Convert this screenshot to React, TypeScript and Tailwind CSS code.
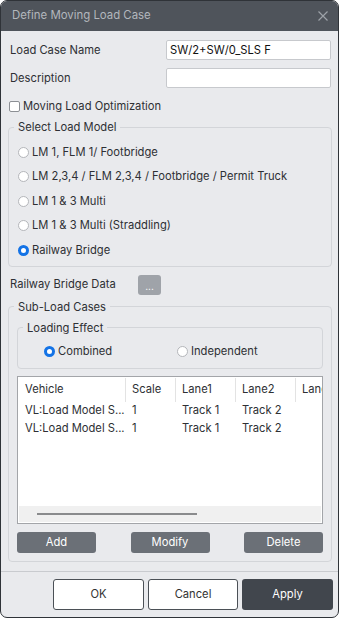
import React from "react";

function Radio({ checked }: { checked?: boolean }) {
  return checked ? (
    <span className="w-[11px] h-[11px] rounded-full border-[3px] border-[#1473e6] bg-white shrink-0" />
  ) : (
    <span className="w-[11px] h-[11px] rounded-full border border-[#b4b6ba] bg-white shrink-0" />
  );
}

const models = [
  "LM 1, FLM 1/ Footbridge",
  "LM 2,3,4 / FLM 2,3,4 / Footbridge / Permit Truck",
  "LM 1 & 3 Multi",
  "LM 1 & 3 Multi (Straddling)",
  "Railway Bridge",
];

export default function App() {
  return (
    <div className="w-[341px] h-[619px] bg-white font-['Inter',sans-serif] text-[11.2px] text-[#2e3034]">
      <div className="w-[339px] h-[618px] rounded-[7px] border border-[#2f3338] bg-[#e9eaed] overflow-hidden flex flex-col">
        {/* title bar */}
        <div className="h-[30px] bg-[#4f545b] flex items-center justify-between pl-[11px] pr-[8px] shrink-0">
          <span className="text-[11.4px] text-[#b3b7bd]">Define Moving Load Case</span>
          <svg width="14" height="14" viewBox="0 0 14 14" fill="none" stroke="#9da2a8" strokeWidth="1.2">
            <path d="M2.5 2.5 L11.5 11.5 M11.5 2.5 L2.5 11.5" />
          </svg>
        </div>

        <div className="flex flex-col pl-[7px] pr-[6px] flex-1 min-w-0">
          <div className="mt-[9px] h-[20px] flex items-center">
            <span className="pl-[2px]">Load Case Name</span>
            <div className="ml-auto mr-[1px] w-[165px] h-[20px] bg-white border border-[#c7c9cd] rounded-[2px] flex items-center pl-[3px] text-[#111]">
              SW/2+SW/0_SLS F
            </div>
          </div>
          <div className="mt-[8px] h-[20px] flex items-center">
            <span className="pl-[2px]">Description</span>
            <div className="ml-auto mr-[1px] w-[165px] h-[20px] bg-white border border-[#c7c9cd] rounded-[2px]" />
          </div>
          <div className="mt-[11px] h-[14px] flex items-center">
            <span className="ml-[1px] w-[11px] h-[11px] bg-white border border-[#8c8f94] rounded-[2px]" />
            <span className="ml-[3px]">Moving Load Optimization</span>
          </div>

          <fieldset className="mt-[7px] min-w-0 border border-[#d3d5d9] rounded-[4px] pb-[3px]">
            <legend className="ml-[5px] px-[4px] h-[14px] leading-[14px]">Select Load Model</legend>
            <div className="pt-[6px] pl-[9px]">
              {models.map((m, i) => (
                <div key={m} className="h-[24.5px] flex items-center">
                  <Radio checked={i === 4} />
                  <span className="ml-[3px]">{m}</span>
                </div>
              ))}
            </div>
          </fieldset>

          <div className="mt-[8px] h-[20px] flex items-center">
            <span className="pl-[2px] w-[130px]">Railway Bridge Data</span>
            <div className="w-[23px] h-[20px] rounded-[3px] bg-[#9fa3a9] flex items-center justify-center text-white text-[10px] leading-none pt-[2px]">
              ...
            </div>
          </div>

          <fieldset className="mt-[5px] min-w-0 border border-[#d3d5d9] rounded-[4px] pb-[8px]">
            <legend className="ml-[5px] px-[4px] h-[14px] leading-[14px]">Sub-Load Cases</legend>
            <div className="px-[8px]">
              <fieldset className="mt-[7px] min-w-0 border border-[#d3d5d9] rounded-[4px] pb-[9px]">
                <legend className="ml-[5px] px-[4px] h-[14px] leading-[14px]">Loading Effect</legend>
                <div className="mt-[10px] h-[14px] flex items-center pl-[26px]">
                  <Radio checked />
                  <span className="ml-[3px] w-[119px]">Combined</span>
                  <Radio />
                  <span className="ml-[3px]">Independent</span>
                </div>
              </fieldset>

              <div className="mt-[7px] h-[148px] w-full min-w-0 bg-white border border-[#a3a5a9] flex flex-col overflow-hidden">
                <div className="h-[25px] flex items-start shrink-0 whitespace-nowrap">
                  <div className="w-[108px] shrink-0 h-[24px] mt-[1px] border-r border-[#e3e3e3] pl-[7px] flex items-center">Vehicle</div>
                  <div className="w-[50px] shrink-0 h-[24px] mt-[1px] border-r border-[#e3e3e3] pl-[6px] flex items-center">Scale</div>
                  <div className="w-[60px] shrink-0 h-[24px] mt-[1px] border-r border-[#e3e3e3] pl-[6px] flex items-center">Lane1</div>
                  <div className="w-[60px] shrink-0 h-[24px] mt-[1px] border-r border-[#e3e3e3] pl-[6px] flex items-center">Lane2</div>
                  <div className="w-[60px] shrink-0 h-[24px] mt-[1px] pl-[6px] flex items-center">Lane3</div>
                </div>
                {[0, 1].map((r) => (
                  <div key={r} className="h-[18px] flex items-center shrink-0 whitespace-nowrap">
                    <div className="w-[108px] shrink-0 pl-[7px]">VL:Load Model S...</div>
                    <div className="w-[50px] shrink-0 pl-[6px]">1</div>
                    <div className="w-[60px] shrink-0 pl-[6px]">Track 1</div>
                    <div className="w-[60px] shrink-0 pl-[6px]">Track 2</div>
                  </div>
                ))}
                <div className="flex-1" />
                <div className="h-[16px] bg-[#f0f0f0] shrink-0 mx-[1px] mb-[1px] relative">
                  <div className="absolute left-[18px] top-[7px] w-[160px] h-[2px] bg-[#8a8b8d]" />
                </div>
              </div>

              <div className="mt-[8px] flex justify-between">
                {["Add", "Modify", "Delete"].map((b) => (
                  <div key={b} className="w-[79px] h-[21px] rounded-[3px] bg-[#6b7077] text-white flex items-center justify-center">
                    {b}
                  </div>
                ))}
              </div>
            </div>
          </fieldset>
        </div>

        <div className="border-t border-[#c9cbcf] pt-[7px] pb-[7px] pr-[5px] flex justify-end gap-[4px] shrink-0">
          <div className="w-[91px] h-[31px] bg-white border border-[#4b5056] rounded-[3px] flex items-center justify-center text-[#333]">OK</div>
          <div className="w-[90px] h-[31px] bg-white border border-[#4b5056] rounded-[3px] flex items-center justify-center text-[#333]">Cancel</div>
          <div className="w-[91px] h-[31px] bg-[#41464d] rounded-[3px] flex items-center justify-center text-white">Apply</div>
        </div>
      </div>
    </div>
  );
}
